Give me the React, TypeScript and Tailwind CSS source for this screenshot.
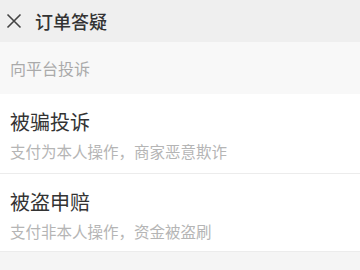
// Order help page: header, section label, two complaint entries.
const items = [
  { title: "被骗投诉", desc: "支付为本人操作，商家恶意欺诈" },
  { title: "被盗申赔", desc: "支付非本人操作，资金被盗刷" },
];

export default function App() {
  return (
    <div
      className="w-[360px] h-[270px] bg-[#f5f5f5] overflow-hidden"
      style={{ fontFamily: '"Noto Sans CJK SC", "Noto Sans", sans-serif' }}
    >
      <header className="h-[42px] bg-[#efefef] flex items-center">
        <svg width="16" height="16" viewBox="0 0 16 16" className="ml-[6px]">
          <path d="M1.5 1.5 L14.5 14.5 M14.5 1.5 L1.5 14.5" stroke="#444" strokeWidth="1.6" fill="none" />
        </svg>
        <span className="ml-[13px] text-[18px] leading-[24px] font-medium text-[#333]">订单答疑</span>
      </header>

      <div className="h-[52px] bg-[#f8f8f8] px-[10px] flex items-center text-[16px] text-[#aaa]">
        向平台投诉
      </div>

      <ul className="bg-white">
        {items.map((it, i) => (
          <li
            key={it.title}
            className={`px-[10px] pt-[16px] border-b border-[#ececec] ${i === 0 ? "h-[80px]" : "h-[78px]"}`}
          >
            <div className="text-[20px] leading-[24px] text-[#333]">{it.title}</div>
            <div className="mt-[7px] text-[15.5px] leading-[20px] text-[#b5b5b5]">{it.desc}</div>
          </li>
        ))}
      </ul>
    </div>
  );
}
